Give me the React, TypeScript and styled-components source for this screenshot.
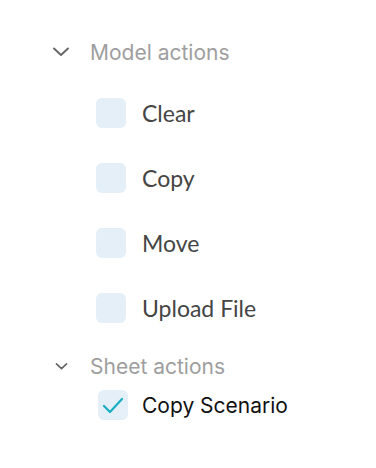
import React, { useState } from "react";
import styled, { createGlobalStyle } from "styled-components";

const GlobalStyle = createGlobalStyle`
  body {
    margin: 0;
    background: #ffffff;
    font-family: "Inter", "Liberation Sans", sans-serif;
  }
`;

type Action = { label: string; checked: boolean };

const modelActions: Action[] = [
  { label: "Clear", checked: false },
  { label: "Copy", checked: false },
  { label: "Move", checked: false },
  { label: "Upload File", checked: false },
];

const sheetActions: Action[] = [{ label: "Copy Scenario", checked: true }];

function Chevron({ small }: { small?: boolean }) {
  const w = small ? 13 : 18;
  return (
    <svg width={w} height={w} viewBox="0 0 18 18" fill="none">
      <path
        d="M2 5.5 L9 12 L16 5.5"
        stroke="#666"
        strokeWidth={small ? 2.4 : 1.9}
        strokeLinecap="round"
        strokeLinejoin="round"
      />
    </svg>
  );
}

function CheckMark() {
  return (
    <svg width="22" height="18" viewBox="0 0 22 18" fill="none">
      <path
        d="M2 10 L8 16 L20 3"
        stroke="#1aaec2"
        strokeWidth="2.2"
        strokeLinecap="round"
        strokeLinejoin="round"
      />
    </svg>
  );
}

function App() {
  const [model, setModel] = useState(modelActions);
  const [sheet, setSheet] = useState(sheetActions);

  const toggle = (
    list: Action[],
    set: (a: Action[]) => void,
    i: number
  ) => set(list.map((a, j) => (j === i ? { ...a, checked: !a.checked } : a)));

  return (
    <Panel>
      <GlobalStyle />
      <Group>
        <GroupHeader>
          <ChevronSlot>
            <Chevron />
          </ChevronSlot>
          <GroupTitle>Model actions</GroupTitle>
        </GroupHeader>
        <ModelList>
          {model.map((a, i) => (
            <Row key={a.label} onClick={() => toggle(model, setModel, i)}>
              <Box>{a.checked && <CheckMark />}</Box>
              <ModelLabel>{a.label}</ModelLabel>
            </Row>
          ))}
        </ModelList>
      </Group>
      <Group>
        <SheetHeader>
          <ChevronSlot small>
            <Chevron small />
          </ChevronSlot>
          <GroupTitle>Sheet actions</GroupTitle>
        </SheetHeader>
        <SheetList>
          {sheet.map((a, i) => (
            <SheetRow key={a.label} onClick={() => toggle(sheet, setSheet, i)}>
              <Box>{a.checked && <CheckMark />}</Box>
              <SheetLabel>{a.label}</SheetLabel>
            </SheetRow>
          ))}
        </SheetList>
      </Group>
    </Panel>
  );
}

const Panel = styled.div`
  padding: 38px 0 0 52px;
  display: flex;
  flex-direction: column;
`;

const Group = styled.section`
  display: flex;
  flex-direction: column;
`;

const GroupHeader = styled.div`
  display: flex;
  align-items: center;
  height: 28px;
`;

const SheetHeader = styled(GroupHeader)`
  margin-top: 30px;
  height: 26px;
`;

const ChevronSlot = styled.div<{ small?: boolean }>`
  width: 38px;
  padding-left: ${(p) => (p.small ? "3px" : "0")};
  box-sizing: border-box;
  display: flex;
  align-items: center;
`;

const GroupTitle = styled.span`
  font-family: "Inter", sans-serif;
  font-size: 21px;
  color: #9e9e9e;
`;

const ModelList = styled.div`
  display: flex;
  flex-direction: column;
  gap: 35px;
  margin-top: 32px;
  padding-left: 44px;
`;

const SheetList = styled.div`
  display: flex;
  flex-direction: column;
  margin-top: 11px;
  padding-left: 46px;
`;

const Row = styled.label`
  display: flex;
  align-items: center;
  gap: 16px;
  cursor: pointer;
`;

const SheetRow = styled(Row)`
  gap: 14px;
`;

const Box = styled.span`
  width: 30px;
  height: 30px;
  border-radius: 6px;
  background: #e4eff8;
  display: flex;
  align-items: center;
  justify-content: center;
  flex-shrink: 0;
`;

const ModelLabel = styled.span`
  font-family: "Lato", sans-serif;
  font-size: 23px;
  color: #454545;
`;

const SheetLabel = styled.span`
  font-family: "Inter", sans-serif;
  font-size: 21px;
  color: #111;
`;

export default App;
